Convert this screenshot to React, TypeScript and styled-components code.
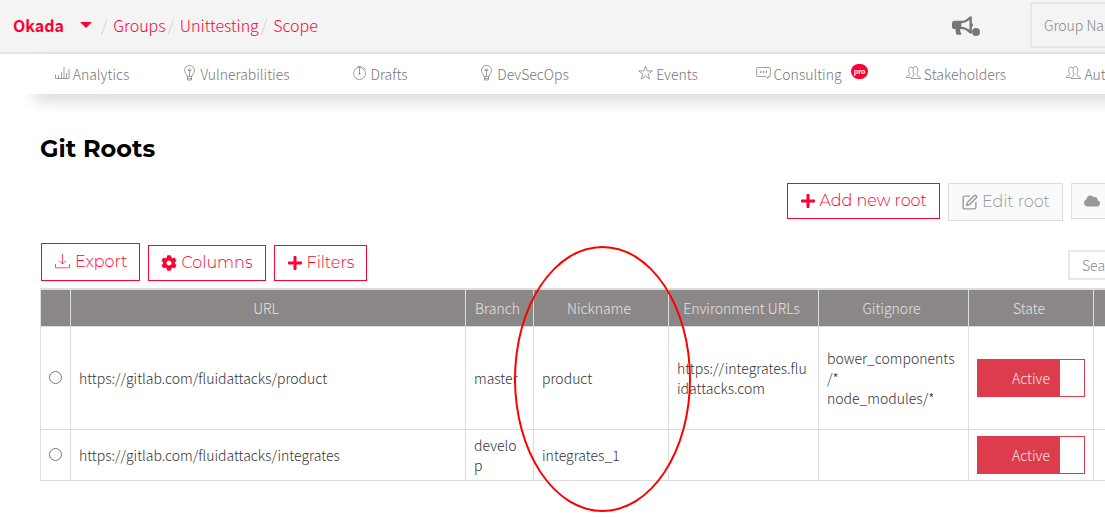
import React from "react";
import styled, { createGlobalStyle } from "styled-components";
import { FaBullhorn, FaCloud, FaCog, FaPlus } from "react-icons/fa";
import { SquarePen } from "lucide-react";

const brand = "#ff0032";
const bodyFont = `"Source Sans Pro", "Noto Sans CJK SC", sans-serif`;
const titleFont = `Montserrat, Inter, sans-serif`;

const GlobalStyle = createGlobalStyle`
  * { box-sizing: border-box; }
  body {
    margin: 0;
    overflow-x: hidden;
    background: #fff;
    color: #333;
    font-family: ${bodyFont};
    font-size: 14px;
    font-weight: 300;
    line-height: 20px;
  }
  button, input { font: inherit; color: inherit; border-radius: 0; }
`;

const Page = styled.div`
  min-width: 1194px;
  display: flex;
  flex-direction: column;
`;

const Header = styled.header`
  height: 54px;
  display: flex;
  align-items: center;
  padding: 0 40px 2px 13px;
  background: #f4f4f4;
  border-bottom: 2px solid #e3e3e3;
`;

const Breadcrumb = styled.nav`
  display: flex;
  align-items: center;
  flex: 1;
  font-size: 16px;
  line-height: 24px;
`;

const OrgButton = styled.button`
  display: flex;
  align-items: center;
  gap: 16px;
  padding: 0;
  border: 0;
  background: none;
  color: ${brand};
  font-weight: 700;
`;

const Caret = styled.span`
  border: 6px solid transparent;
  border-top-color: ${brand};
  border-bottom-width: 0;
`;

const Crumb = styled.span`
  display: flex;
  &::before {
    content: "/";
    padding: 0 6px 0 2px;
    color: #ccc;
  }
  &:first-of-type::before { padding-left: 9px; }
`;

const CrumbLink = styled.a`
  color: ${brand};
  text-decoration: none;
`;

const NewsButton = styled.button`
  display: flex;
  align-items: flex-end;
  padding: 0;
  margin-right: 50px;
  border: 0;
  background: none;
  color: #777;
`;

const NewsDot = styled.span`
  width: 8px;
  height: 8px;
  margin-left: -1px;
  border-radius: 50%;
  background: currentColor;
`;

const TextField = styled.input<{ $tall?: boolean }>`
  width: ${(p) => (p.$tall ? 124 : 86)}px;
  height: ${(p) => (p.$tall ? 46 : 30)}px;
  padding: 0 12px;
  border: 2px solid #e7e7e7;
  background: transparent;
  outline: none;
  &::placeholder { color: #888; opacity: 1; }
`;

const TabBar = styled.nav`
  display: flex;
  height: 40px;
  margin: 0 20px;
  background: #fff;
  box-shadow: 0 18px 18px -16px rgba(0, 0, 0, 0.2), 12px 8px 16px rgba(0, 0, 0, 0.06);
`;

const Tab = styled.a`
  flex: 0 0 144px;
  display: flex;
  align-items: center;
  justify-content: center;
  gap: 3px;
  color: #777;
  text-decoration: none;
`;

const ProBadge = styled.span`
  align-self: flex-start;
  margin: 10px 0 0 6px;
  padding: 0 3px;
  border-radius: 8px;
  background: ${brand};
  color: #fff;
  font-size: 7px;
  font-weight: 700;
  line-height: 15px;
`;

const LineIcon = styled.svg<{ $size?: number }>`
  width: ${(p) => p.$size ?? 15}px;
  height: 16px;
  flex: none;
  margin-bottom: 2px;
  fill: none;
  stroke: currentColor;
  stroke-width: 0.7;
`;

const Content = styled.main`
  padding: 39px 40px 32px;
`;

const Title = styled.h1`
  margin: 0;
  color: #000;
  font: 700 24px/32px ${titleFont};
`;

const Toolbar = styled.div<{ $end?: boolean }>`
  display: flex;
  align-items: ${(p) => (p.$end ? "flex-start" : "flex-end")};
  justify-content: ${(p) => (p.$end ? "flex-end" : "flex-start")};
  gap: 8px;
  margin-top: ${(p) => (p.$end ? 18 : 22)}px;
  padding-left: 1px;
`;

const Button = styled.button<{ $tall?: boolean }>`
  display: flex;
  align-items: center;
  gap: 4px;
  height: ${(p) => (p.$tall ? 38 : 36)}px;
  padding: 0 12px;
  border: 1px solid ${brand};
  background: #fff;
  color: ${brand};
  font: 300 16px/24px ${titleFont};
  white-space: nowrap;
  &:disabled {
    border-color: #ddd;
    background: #fafafa;
    color: #999;
  }
`;

const SyncButton = styled(Button)`
  width: 83px;
`;

const SearchSlot = styled.div`
  display: flex;
  margin-left: auto;
  padding-bottom: 1px;
`;

const Table = styled.table`
  width: 100%;
  margin-top: 7px;
  table-layout: fixed;
  border-collapse: collapse;
`;

const HeadCell = styled.th<{ $width?: number }>`
  position: relative;
  width: ${(p) => (p.$width ? `${p.$width}px` : "auto")};
  height: 37px;
  padding: 0 12px 0 8px;
  border: 1px solid #ddd;
  border-top-width: 2px;
  background: #8b8787;
  color: #e3e3e3;
  font-weight: 300;
  white-space: nowrap;
`;

const Row = styled.tr<{ $height: number }>`
  height: ${(p) => p.$height}px;
`;

const Cell = styled.td`
  padding: 5px 10px 5px 8px;
  border: 1px solid #ddd;
  vertical-align: middle;
  overflow-wrap: break-word;
`;

const RadioCell = styled(Cell)`
  padding: 0 0 4px;
  text-align: center;
`;

const Radio = styled.input`
  width: 13px;
  height: 13px;
  margin: 0;
  vertical-align: middle;
`;

const Switch = styled.button`
  display: flex;
  width: 108px;
  height: 38px;
  padding: 0;
  border: 1px solid #dc3c4c;
  background: #fff;
  color: #fae6e8;
`;

const SwitchLabel = styled.span`
  width: 82px;
  height: 36px;
  padding-left: 24px;
  background: #dc3c4c;
  line-height: 36px;
`;

const Marker = styled.span`
  position: absolute;
  top: -44px;
  left: -20px;
  z-index: 1;
  width: 177px;
  height: 266px;
  border: 2px solid #f00;
  border-radius: 50%;
  pointer-events: none;
`;

const icons = {
  chart: <path d="M.5 9.500v4h13.500V4M3.500 13.500V10M6.500 13.500V7M9 13.500V2M11.500 13.500V8" />,
  bulb: (
    <path d="M5 11.500C5 9 2.500 8.500 2.500 5.500a5 5 0 0 1 10 0c0 3-2.500 3.500-2.500 6zM5.500 11.500v3.500h4v-3.500M5.500 13.500h4M7.500 11V6M6 5.500a1.500 1.500 0 1 1 3 0z" />
  ),
  watch: (
    <>
      <circle cx="7.500" cy="8.500" r="6" />
      <path d="M7.500 9V2.500M5.500 1.500h4M11.500 2.500l2 1.500" />
      <circle cx="7.500" cy="8.500" r="0.700" />
    </>
  ),
  star: <path d="M7.500 1l1.700 4.900h5.100l-4.100 3.200 1.500 5-4.200-3-4.200 3 1.500-5L.7 5.900h5.100z" />,
  chat: (
    <>
      <path d="M1.500 2.500h12q.8 0 .8.8v7.400q0 .8-.8.800h-1.500v2l-2.500-2h-8q-.8 0-.8-.8V3.300q0-.8.8-.8z" />
      <path d="M4.200 7h1.300M7 7h1.300M9.800 7h1.300" strokeWidth="1.300" />
    </>
  ),
  users: (
    <>
      <path d="M.5 12.500c0-2.500 4-1.500 3-4C2 6 2.500 2 5 2c1 0 1.500.5 2 1M.5 12.500h4" />
      <path d="M5 13.500c0-3 4-2 3-4.500C6.500 6 7 1.500 9.500 1.500S12.500 6 11 9c-1 2.500 3.500 1.500 3.500 4.500z" />
    </>
  ),
  download: <path d="M7.500 1v10M4 7.500l3.500 3.500 3.500-3.500M.5 11v3.800h14V11" />,
};

const Icon = ({ name, size }: { name: keyof typeof icons; size?: number }) => (
  <LineIcon viewBox="0 0 15 16" $size={size} aria-hidden="true">
    {icons[name]}
  </LineIcon>
);

const tabs: { icon: keyof typeof icons; label: string; pro?: boolean }[] = [
  { icon: "chart", label: "Analytics" },
  { icon: "bulb", label: "Vulnerabilities" },
  { icon: "watch", label: "Drafts" },
  { icon: "bulb", label: "DevSecOps" },
  { icon: "star", label: "Events" },
  { icon: "chat", label: "Consulting", pro: true },
  { icon: "users", label: "Stakeholders" },
  { icon: "users", label: "Authors" },
];

const roots = [
  {
    url: "https://gitlab.com/fluidattacks/product",
    branch: "master",
    nickname: "product",
    environment: "https://integrates.fluidattacks.com",
    ignored: ["bower_components/*", "node_modules/*"],
    height: 103,
  },
  {
    url: "https://gitlab.com/fluidattacks/integrates",
    branch: "develop",
    nickname: "integrates_1",
    environment: "",
    ignored: [],
    height: 51,
  },
];

export default function App() {
  return (
    <Page>
      <GlobalStyle />
      <Header>
        <Breadcrumb aria-label="Breadcrumb">
          <OrgButton>
            Okada
            <Caret />
          </OrgButton>
          {["Groups", "Unittesting", "Scope"].map((name) => (
            <Crumb key={name}>
              <CrumbLink href="#">{name}</CrumbLink>
            </Crumb>
          ))}
        </Breadcrumb>
        <NewsButton aria-label="News">
          <FaBullhorn size={21} />
          <NewsDot />
        </NewsButton>
        <TextField $tall placeholder="Group Name" aria-label="Group Name" />
      </Header>
      <TabBar>
        {tabs.map((tab) => (
          <Tab key={tab.label} href="#">
            <Icon name={tab.icon} />
            {tab.label}
            {tab.pro && <ProBadge>pro</ProBadge>}
          </Tab>
        ))}
      </TabBar>
      <Content>
        <Title>Git Roots</Title>
        <Toolbar $end>
          <Button>
            <FaPlus size={16} />
            Add new root
          </Button>
          <Button $tall disabled>
            <SquarePen size={17} />
            Edit root
          </Button>
          <SyncButton disabled aria-label="Sync">
            <FaCloud size={16} />
          </SyncButton>
        </Toolbar>
        <Toolbar>
          <Button $tall>
            <Icon name="download" size={17} />
            Export
          </Button>
          <Button>
            <FaCog size={16} />
            Columns
          </Button>
          <Button>
            <FaPlus size={16} />
            Filters
          </Button>
          <SearchSlot>
            <TextField placeholder="Search" aria-label="Search" />
          </SearchSlot>
        </Toolbar>
        <Table>
          <thead>
            <tr>
              <HeadCell $width={30} />
              <HeadCell>URL</HeadCell>
              <HeadCell $width={68}>Branch</HeadCell>
              <HeadCell $width={135}>
                Nickname
                <Marker />
              </HeadCell>
              <HeadCell $width={150}>Environment URLs</HeadCell>
              <HeadCell $width={150}>Gitignore</HeadCell>
              <HeadCell $width={125}>State</HeadCell>
              <HeadCell $width={60} />
            </tr>
          </thead>
          <tbody>
            {roots.map((root) => (
              <Row key={root.url} $height={root.height}>
                <RadioCell>
                  <Radio type="radio" name="root" aria-label={root.nickname} />
                </RadioCell>
                <Cell>{root.url}</Cell>
                <Cell>{root.branch}</Cell>
                <Cell>{root.nickname}</Cell>
                <Cell>{root.environment}</Cell>
                <Cell>
                  {root.ignored.map((path) => (
                    <div key={path}>{path}</div>
                  ))}
                </Cell>
                <Cell>
                  <Switch role="switch" aria-checked="true">
                    <SwitchLabel>Active</SwitchLabel>
                  </Switch>
                </Cell>
                <Cell />
              </Row>
            ))}
          </tbody>
        </Table>
      </Content>
    </Page>
  );
}
